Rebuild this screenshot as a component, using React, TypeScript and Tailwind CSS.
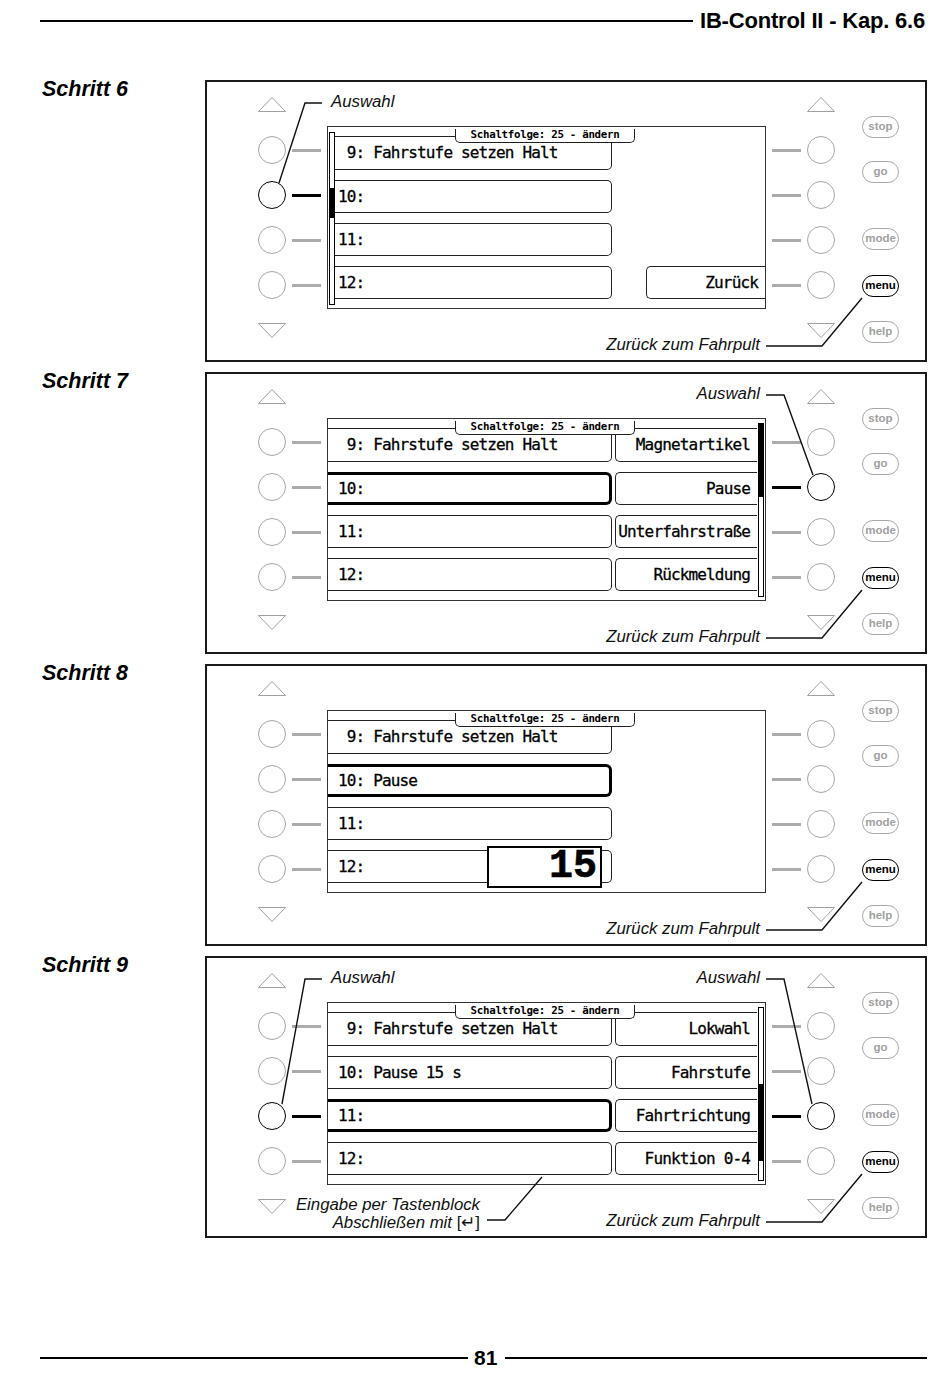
import React from "react";

type Cfg = {
  rows: string[];
  selected?: number;
  leftThumb?: [number, number];
  right?: string[];
  rightThumb?: [number, number];
  zurueck?: boolean;
  box?: string;
};

function Tri({ down }: { down?: boolean }) {
  return (
    <svg width="28" height="15" viewBox="0 0 28 15" className="block">
      <polygon
        points={down ? "0.5,0.5 27.5,0.5 14,14.5" : "0.5,14.5 27.5,14.5 14,0.5"}
        fill="none"
        stroke="#a0a0a0"
        strokeWidth="1"
      />
    </svg>
  );
}

function Circle({ on }: { on: boolean }) {
  return (
    <div
      className={`w-[28px] h-[28px] rounded-full border shrink-0 ${
        on ? "border-black" : "border-[#a6a6a6]"
      }`}
    />
  );
}

function Dash({ on }: { on: boolean }) {
  return <div className={`w-[29px] h-[3px] shrink-0 ${on ? "bg-black" : "bg-[#ababab]"}`} />;
}

function Controls({ side, active }: { side: "l" | "r"; active?: number }) {
  return (
    <div className={`flex flex-col pt-[15px] w-[63px] shrink-0 ${side === "l" ? "items-start" : "items-end"}`}>
      <Tri />
      <div className="flex flex-col gap-[17px] mt-[24px]">
        {[0, 1, 2, 3].map((i) => (
          <div key={i} className="flex items-center gap-[6px]">
            {side === "l" ? (
              <>
                <Circle on={active === i} />
                <Dash on={active === i} />
              </>
            ) : (
              <>
                <Dash on={active === i} />
                <Circle on={active === i} />
              </>
            )}
          </div>
        ))}
      </div>
      <div className="mt-[24px]">
        <Tri down />
      </div>
    </div>
  );
}

function Pill({ label, className }: { label: string; className: string }) {
  const on = label === "menu";
  return (
    <div
      className={`w-[37px] h-[22px] rounded-full border flex items-center justify-center text-[11.5px] leading-none font-bold ${
        on ? "border-black text-black" : "border-[#a8a8a8] text-[#a0a0a0]"
      } ${className}`}
    >
      {label}
    </div>
  );
}

function Pills() {
  return (
    <div className="flex flex-col ml-[27px] shrink-0">
      <Pill label="stop" className="mt-[34px]" />
      <Pill label="go" className="mt-[23px]" />
      <Pill label="mode" className="mt-[45px]" />
      <Pill label="menu" className="mt-[25px]" />
      <Pill label="help" className="mt-[24px]" />
    </div>
  );
}

function ScrollBar({ thumb, className }: { thumb: [number, number]; className: string }) {
  return (
    <div className={`w-[6px] border border-black bg-white shrink-0 flex flex-col ${className}`}>
      <div style={{ height: thumb[0] }} />
      <div className="bg-black" style={{ height: thumb[1] }} />
    </div>
  );
}

function Screen({ cfg }: { cfg: Cfg }) {
  const hasLeft = !!cfg.leftThumb;
  return (
    <div className="relative w-[439px] h-[183px] mt-[44px] border border-[#333] bg-white font-['DejaVu_Sans_Mono',monospace] text-[16px] tracking-[-0.85px] text-black [-webkit-text-stroke:0.3px_black]">
      <div className="flex h-full">
        {cfg.leftThumb && <ScrollBar thumb={cfg.leftThumb} className="ml-[1px] mt-[5px] h-[173px]" />}
        <div className="flex flex-col pt-[9px] gap-[10px] flex-1">
          {cfg.rows.map((t, i) => {
            const sel = cfg.selected === i;
            return (
              <div key={i} className={`flex ${i === 0 ? "h-[34px]" : "h-[33px]"}`}>
                <div
                  className={`flex items-center whitespace-pre shrink-0 ${
                    hasLeft ? "w-[277px] pl-[3px]" : "w-[284px] pl-[10px]"
                  } ${
                    sel
                      ? "border-y-[3px] border-r-[3px] border-black rounded-r-[6px]"
                      : "border-y border-r border-[#222] rounded-r-[5px]"
                  }`}
                >
                  {t}
                </div>
                {cfg.right && (
                  <div className="ml-[3px] w-[142px] shrink-0 border-y border-l border-[#222] rounded-l-[5px] flex items-center justify-end pr-[7px] whitespace-pre">
                    {cfg.right[i]}
                  </div>
                )}
                {cfg.zurueck && i === 3 && (
                  <div className="ml-[34px] flex-1 border-y border-l border-[#222] rounded-l-[5px] flex items-center justify-end pr-[7px]">
                    Zurück
                  </div>
                )}
              </div>
            );
          })}
        </div>
        {cfg.rightThumb && <ScrollBar thumb={cfg.rightThumb} className="ml-[1px] mr-[1px] mt-[4px] h-[174px]" />}
      </div>
      <div className="absolute left-[127px] top-[2px] w-[180px] h-[14px] bg-white border-x border-b border-[#222] rounded-b-[5px] flex items-center justify-center text-[10.8px] tracking-[-0.3px] leading-none font-bold [-webkit-text-stroke:0px_black]">
        Schaltfolge: 25 - ändern
      </div>
      {cfg.box && (
        <div className="absolute left-[159px] top-[135px] w-[115px] h-[42px] border-2 border-black bg-white flex items-center justify-end pr-[3px] font-['Liberation_Mono',monospace] font-bold text-[40px] tracking-[0px] leading-none [-webkit-text-stroke:0.6px_black]">
          {cfg.box}
        </div>
      )}
    </div>
  );
}

const annot = "absolute text-[16.8px] leading-[18px] italic text-[#111] whitespace-nowrap";

function Panel({
  cfg,
  leftActive,
  rightActive,
  leftAuswahl,
  rightAuswahl,
  eingabe,
}: {
  cfg: Cfg;
  leftActive?: number;
  rightActive?: number;
  leftAuswahl?: boolean;
  rightAuswahl?: boolean;
  eingabe?: boolean;
}) {
  const circleY = [68, 113, 158, 203];
  return (
    <div className="relative w-[722px] h-[282px] border-2 border-[#1a1a1a] shrink-0">
      <div className="flex pl-[51px]">
        <Controls side="l" active={leftActive} />
        <div className="ml-[6px]">
          <Screen cfg={cfg} />
        </div>
        <div className="ml-[6px]">
          <Controls side="r" active={rightActive} />
        </div>
        <Pills />
      </div>
      {leftAuswahl && <div className={`${annot} left-[124px] top-[11px]`}>Auswahl</div>}
      {rightAuswahl && <div className={`${annot} right-[165px] top-[11px]`}>Auswahl</div>}
      <div className={`${annot} right-[165px] top-[254px]`}>Zurück zum Fahrpult</div>
      {eingabe && (
        <div className={`${annot} right-[445px] top-[238px] text-right`}>
          <div>Eingabe per Tastenblock</div>
          <div>
            Abschließen mit <span className="not-italic">[↵]</span>
          </div>
        </div>
      )}
      <svg className="absolute left-0 top-0 pointer-events-none" width="718" height="278" viewBox="0 0 718 278">
        <g fill="none" stroke="#111" strokeWidth="1.4">
          <polyline points="559,264 615,264 655,216" />
          {leftAuswahl && leftActive !== undefined && (
            <polyline points={`115,21 98,21 ${leftActive === 1 ? 72 : 75},${circleY[leftActive] - 12}`} />
          )}
          {rightAuswahl && rightActive !== undefined && (
            <polyline points={`559,21 577,21 ${rightActive === 1 ? 606 : 605},${circleY[rightActive] - 12}`} />
          )}
          {eingabe && <polyline points="280,262 298,262 335,219" />}
        </g>
      </svg>
    </div>
  );
}

function Step({ label, children }: { label: string; children: React.ReactNode }) {
  return (
    <div className="flex pl-[42px]">
      <div className="w-[163px] text-[21.5px] leading-[18px] font-bold italic shrink-0">{label}</div>
      {children}
    </div>
  );
}

const row9 = "\u00a09: Fahrstufe setzen Halt";

export default function App() {
  return (
    <div className="w-[950px] h-[1374px] bg-white text-black font-['Liberation_Sans',Arial,sans-serif] overflow-hidden">
      <div className="flex items-center mt-[9px] h-[24px] pl-[40px] pr-[25px]">
        <div className="flex-1 h-[2px] bg-black" />
        <div className="ml-[7px] text-[22px] font-bold leading-[24px] tracking-[-0.2px]">IB-Control II - Kap. 6.6</div>
      </div>

      <div className="flex flex-col gap-[10px] mt-[47px]">
        <Step label="Schritt 6">
          <Panel
            cfg={{ rows: [row9, "10:", "11:", "12:"], leftThumb: [55, 30], zurueck: true }}
            leftActive={1}
            leftAuswahl
          />
        </Step>
        <Step label="Schritt 7">
          <Panel
            cfg={{
              rows: [row9, "10:", "11:", "12:"],
              selected: 1,
              right: ["Magnetartikel", "Pause", "Unterfahrstraße", "Rückmeldung"],
              rightThumb: [0, 73],
            }}
            rightActive={1}
            rightAuswahl
          />
        </Step>
        <Step label="Schritt 8">
          <Panel cfg={{ rows: [row9, "10: Pause", "11:", "12:"], selected: 1, box: "15" }} />
        </Step>
        <Step label="Schritt 9">
          <Panel
            cfg={{
              rows: [row9, "10: Pause 15 s", "11:", "12:"],
              selected: 2,
              right: ["Lokwahl", "Fahrstufe", "Fahrtrichtung", "Funktion 0-4"],
              rightThumb: [76, 77],
            }}
            leftActive={2}
            rightActive={2}
            leftAuswahl
            rightAuswahl
            eingabe
          />
        </Step>
      </div>

      <div className="flex items-center mt-[108px] h-[24px] pl-[40px] pr-[23px]">
        <div className="w-[428px] h-[2px] bg-black" />
        <div className="ml-[6px] mr-[8px] text-[21px] font-bold leading-[24px]">81</div>
        <div className="flex-1 h-[2px] bg-black" />
      </div>
    </div>
  );
}
